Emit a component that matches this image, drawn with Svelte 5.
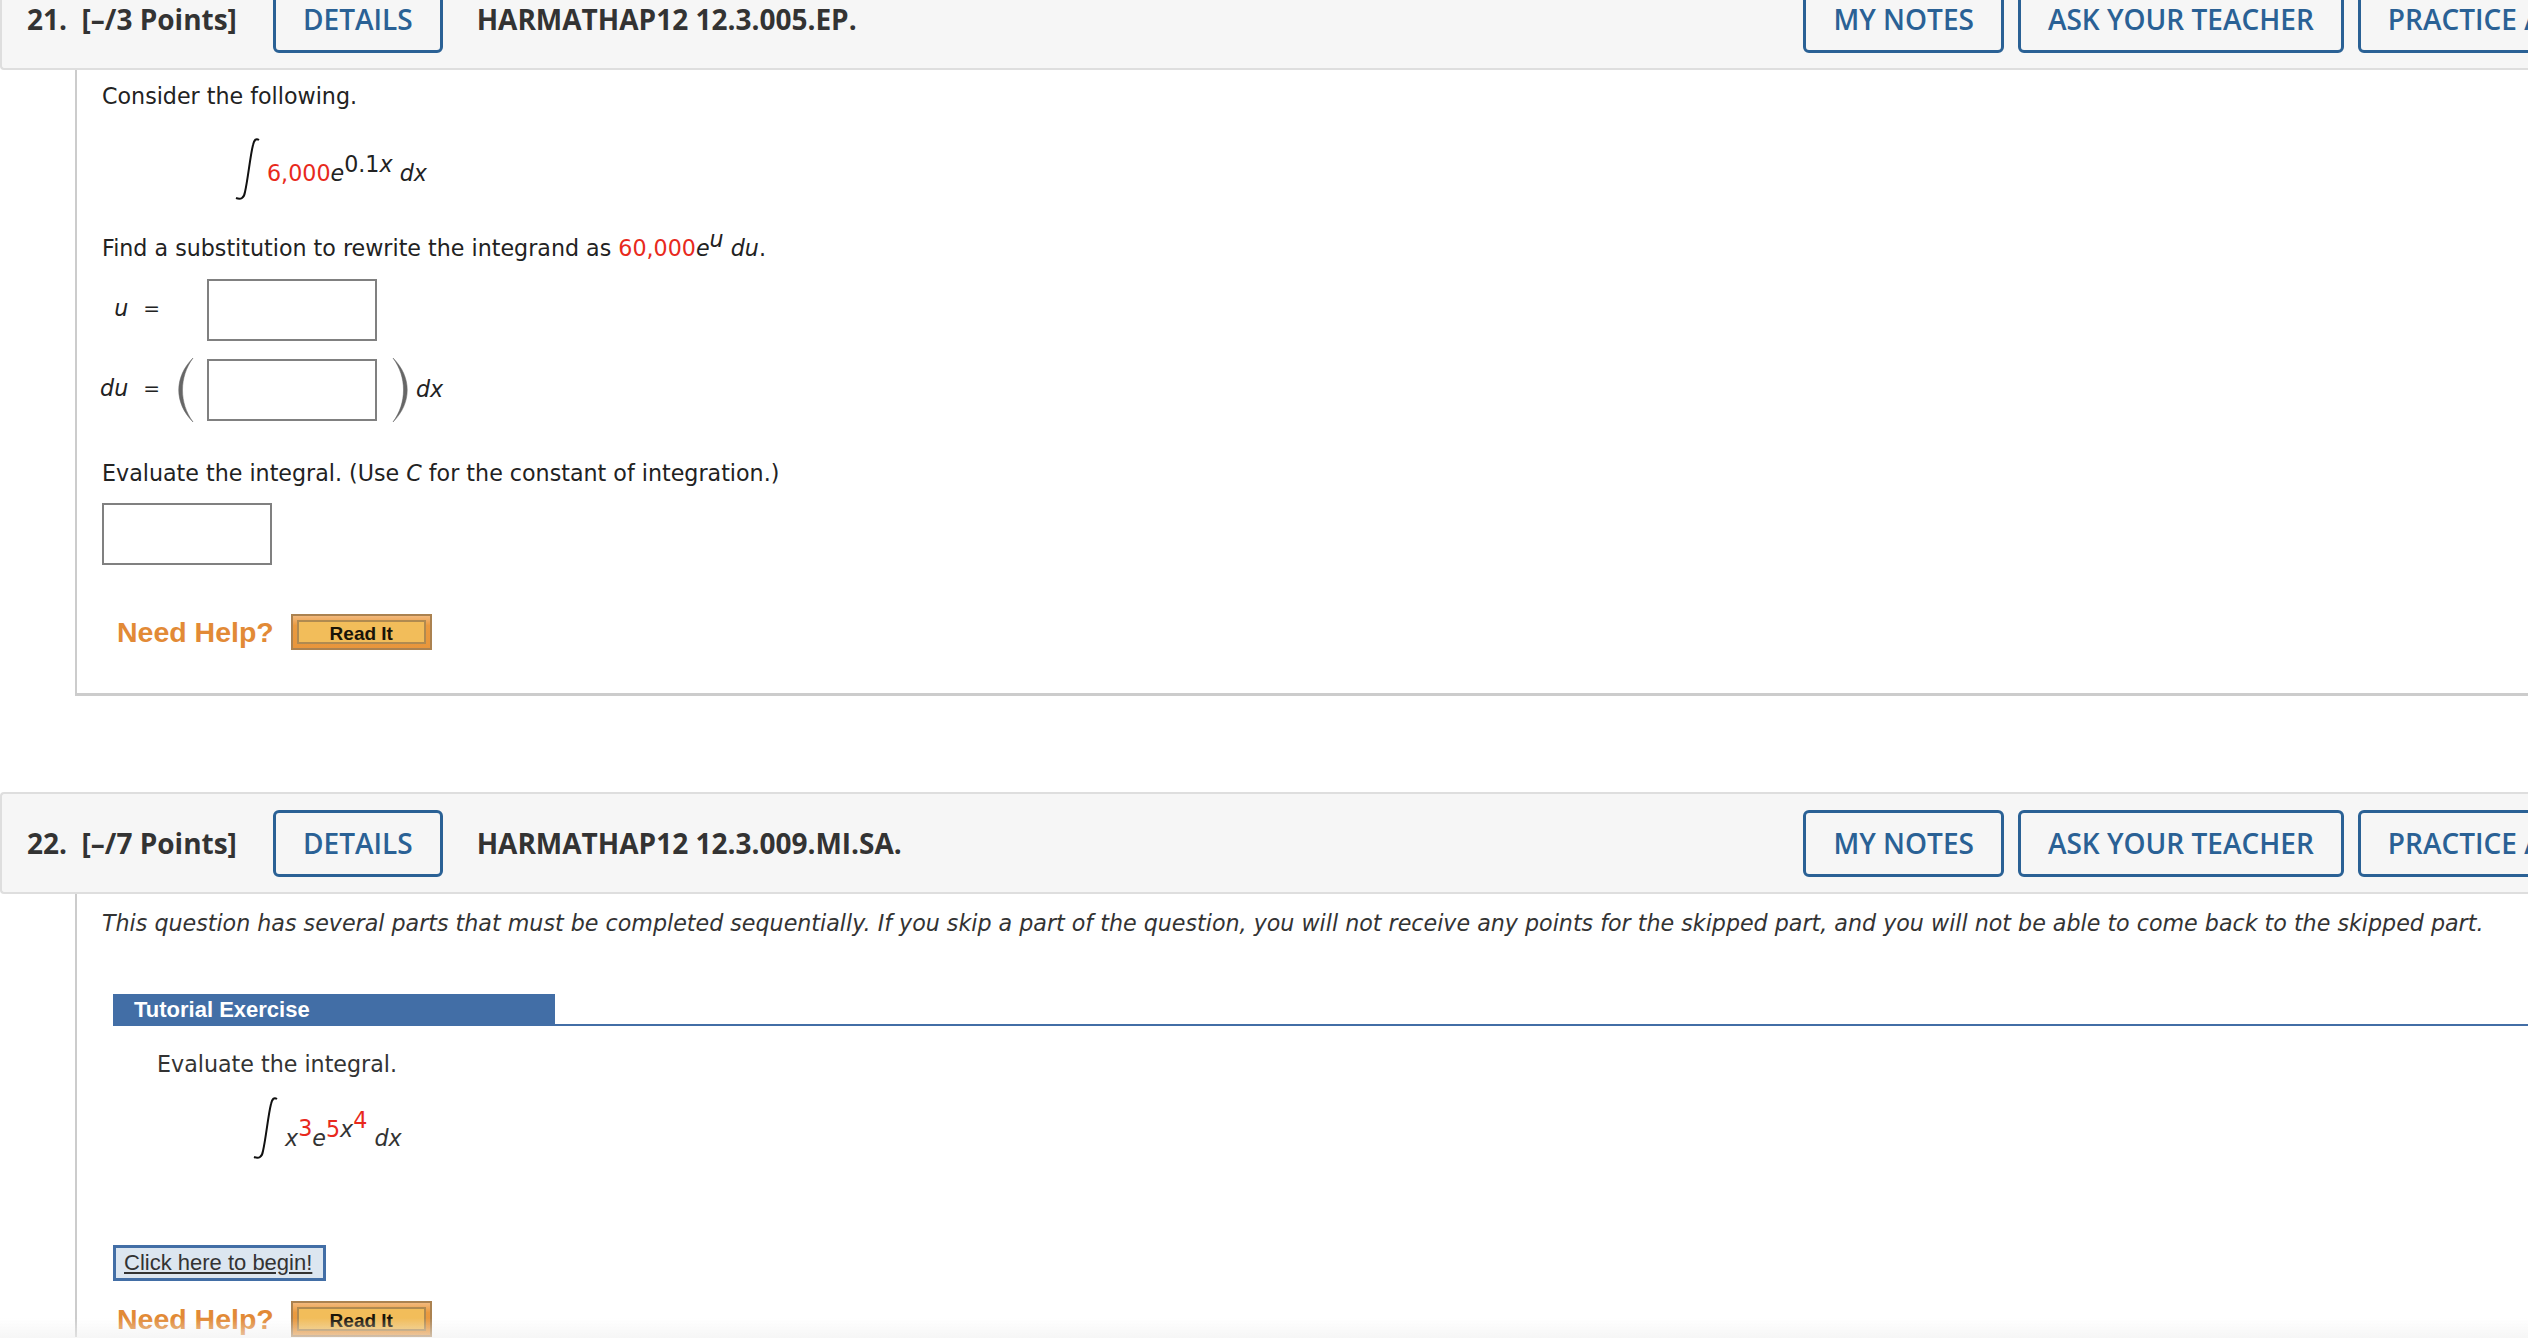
<script>
  const buttons = ["MY NOTES", "ASK YOUR TEACHER", "PRACTICE ANOTHER"];
</script>

<style>
  :global(body) {
    margin: 0;
    background: #fff;
    overflow: hidden;
  }
  .page {
    width: 2687px;
    height: 1370px;
    margin-top: -32px;
    overflow: hidden;
    font-family: "DejaVu Sans", Verdana, sans-serif;
    font-size: 22.2px;
    color: #222;
  }
  .head {
    height: 102px;
    display: flex;
    align-items: center;
    gap: 14px;
    padding-left: 25px;
    box-sizing: border-box;
    background: #f6f6f6;
    border: 2px solid #dedede;
    border-right: 0;
    border-radius: 4px 0 0 4px;
    font-family: "Open Sans", sans-serif;
    font-size: 28px;
    font-weight: 600;
    color: #333;
  }
  .num {
    width: 232px;
    flex: none;
    white-space: pre;
    font-weight: 700;
  }
  .title {
    margin-left: 20px;
    flex: 1;
    font-weight: 700;
  }
  .btn {
    height: 67px;
    padding: 0 27px;
    display: flex;
    align-items: center;
    box-sizing: border-box;
    border: 3px solid #2a6195;
    border-radius: 6px;
    color: #2a6195;
    white-space: nowrap;
    flex: none;
  }
  .body {
    margin-left: 75px;
    border-left: 2px solid #ccc;
    padding-left: 25px;
    box-sizing: border-box;
  }
  .q21 {
    height: 626px;
    border-bottom: 3px solid #ccc;
    margin-bottom: 96px;
    padding-top: 12px;
  }
  .q22 {
    padding-top: 15px;
    color: #333;
  }
  p {
    margin: 0;
    line-height: 28px;
  }
  .red {
    color: #e8291c;
  }
  sup {
    font-size: 1em;
    line-height: 0;
    vertical-align: 0.42em;
  }
  .formula {
    display: flex;
    align-items: flex-end;
    gap: 6px;
  }
  .f1 {
    margin: 27px 0 0 131px;
    height: 64px;
  }
  .f1 span.expr {
    line-height: 28px;
    padding-bottom: 14px;
  }
  .f2 span.expr {
    line-height: 28px;
    padding-bottom: 8px;
  }
  .sub {
    margin-top: 33px;
    padding-bottom: 1px;
  }
  .row {
    display: flex;
    align-items: center;
    height: 62px;
    margin-top: 16px;
  }
  .row + .row {
    margin-top: 18px;
  }
  .label {
    width: 58px;
    flex: none;
    display: flex;
    justify-content: flex-end;
    align-items: center;
    gap: 15px;
    padding-bottom: 4px;
    box-sizing: border-box;
  }
  .eq {
    font-size: 20px;
  }
  .row1 .label {
    margin-right: 47px;
  }
  .paren {
    flex: none;
    display: block;
  }
  .box {
    width: 170px;
    height: 62px;
    box-sizing: border-box;
    border: 2px solid #808080;
    background: #fff;
    flex: none;
  }
  .dx {
    padding-bottom: 3px;
  }
  .eval {
    margin-top: 38px;
  }
  .solo {
    margin-top: 16px;
  }
  .help {
    display: flex;
    align-items: center;
    gap: 17px;
    padding-left: 15px;
    height: 36px;
    font-family: "Liberation Sans", Arial, sans-serif;
  }
  .q21 .help {
    margin-top: 49px;
  }
  .need {
    font-size: 28.5px;
    font-weight: bold;
    color: #e28a36;
    line-height: 36px;
  }
  .read {
    width: 141px;
    height: 36px;
    box-sizing: border-box;
    padding: 4px;
    border: 2px solid #ab8250;
    background: linear-gradient(#f3b97c, #ea9a3f 30%, #e8963c);
  }
  .read div {
    height: 100%;
    box-sizing: border-box;
    border: 2px solid #b08a50;
    background: #f2bd5a;
    color: #1a1408;
    font-size: 19px;
    font-weight: bold;
    line-height: 23px;
    text-align: center;
  }
  .tut {
    margin: 57px 0 0 11px;
    height: 32px;
    border-bottom: 2px solid #426ea6;
    box-sizing: border-box;
  }
  .tut div {
    width: 442px;
    height: 32px;
    box-sizing: border-box;
    padding-left: 21px;
    background: #426ea6;
    color: #fff;
    font-family: "Liberation Sans", Arial, sans-serif;
    font-size: 22px;
    font-weight: bold;
    line-height: 32px;
  }
  .tut-q {
    margin: 24px 0 0 55px;
  }
  .f2 {
    margin: 18px 0 0 149px;
    height: 64px;
  }
  .begin {
    display: block;
    width: fit-content;
    margin: 85px 0 0 11px;
    height: 36px;
    padding: 0 11px 0 8px;
    box-sizing: border-box;
    border: 3px solid #426ea6;
    background: #dce6f0;
    font-family: "Liberation Sans", Arial, sans-serif;
    font-size: 22px;
    line-height: 29px;
    color: #333;
    text-decoration: underline;
  }
  .q22 .help {
    margin-top: 20px;
  }
  .fade {
    position: fixed;
    left: 0;
    right: 0;
    bottom: 0;
    height: 20px;
    background: linear-gradient(rgba(240, 240, 240, 0), rgba(240, 240, 240, 0.6));
    pointer-events: none;
  }
</style>

<div class="page">
  <div class="head">
    <div class="num">21.  [–/3 Points]</div>
    <div class="btn">DETAILS</div>
    <div class="title">HARMATHAP12 12.3.005.EP.</div>
    {#each buttons as b}
      <div class="btn">{b}</div>
    {/each}
  </div>
  <div class="body q21">
    <p>Consider the following.</p>
    <div class="formula f1">
      <svg width="28" height="64" viewBox="0 0 28 64">
        <path d="M26 3c-3-2-5 0-6 5-3 12-5 34-8 47-1 6-4 8-9 6" fill="none" stroke="#111" stroke-width="2"/>
      </svg>
      <span class="expr"><span class="red">6,000</span><i>e</i><sup>0.1<i>x</i></sup> <i>dx</i></span>
    </div>
    <p class="sub">Find a substitution to rewrite the integrand as <span class="red">60,000</span><i>e<sup>u</sup> du</i>.</p>
    <div class="row row1">
      <div class="label"><i>u</i><span class="eq">=</span></div>
      <div class="box"></div>
    </div>
    <div class="row">
      <div class="label"><i>du</i><span class="eq">=</span></div>
      <svg class="paren" width="47" height="66" viewBox="0 0 47 66">
        <path d="M33 1C14 20 14 46 33 65C19 46 19 20 33 1Z" fill="#666" stroke="#666" stroke-width=".5"/>
      </svg>
      <div class="box"></div>
      <svg class="paren" width="39" height="66" viewBox="0 0 39 66">
        <path d="M16 1C35 20 35 46 16 65C30 46 30 20 16 1Z" fill="#666" stroke="#666" stroke-width=".5"/>
      </svg>
      <i class="dx">dx</i>
    </div>
    <p class="eval">Evaluate the integral. (Use <i>C</i> for the constant of integration.)</p>
    <div class="box solo"></div>
    <div class="help">
      <span class="need">Need Help?</span>
      <div class="read"><div>Read It</div></div>
    </div>
  </div>

  <div class="head">
    <div class="num">22.  [–/7 Points]</div>
    <div class="btn">DETAILS</div>
    <div class="title">HARMATHAP12 12.3.009.MI.SA.</div>
    {#each buttons as b}
      <div class="btn">{b}</div>
    {/each}
  </div>
  <div class="body q22">
    <p><i>This question has several parts that must be completed sequentially. If you skip a part of the question, you will not receive any points for the skipped part, and you will not be able to come back to the skipped part.</i></p>
    <div class="tut"><div>Tutorial Exercise</div></div>
    <p class="tut-q">Evaluate the integral.</p>
    <div class="formula f2">
      <svg width="28" height="64" viewBox="0 0 28 64">
        <path d="M26 3c-3-2-5 0-6 5-3 12-5 34-8 47-1 6-4 8-9 6" fill="none" stroke="#111" stroke-width="2"/>
      </svg>
      <span class="expr"><i>x</i><sup class="red">3</sup><i>e</i><sup><span class="red">5</span><i>x</i><sup class="red">4</sup></sup> <i>dx</i></span>
    </div>
    <a class="begin">Click here to begin!</a>
    <div class="help">
      <span class="need">Need Help?</span>
      <div class="read"><div>Read It</div></div>
    </div>
  </div>
  <div class="fade"></div>
</div>
